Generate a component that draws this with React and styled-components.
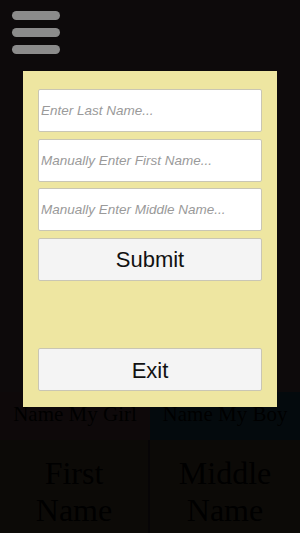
import React from "react";
import styled, { createGlobalStyle } from "styled-components";

const Global = createGlobalStyle`
  html, body {
    margin: 0;
    padding: 0;
    width: 300px;
    height: 533px;
    overflow: hidden;
    background: #e9b7c8;
  }
  * { box-sizing: border-box; }
`;

const Page = styled.div`
  width: 300px;
  height: 533px;
  display: flex;
  flex-direction: column;
  font-family: "Liberation Serif", "Times New Roman", serif;
  color: #000;
  background: #e9b7c8;
`;

const Top = styled.div`
  height: 392px;
  flex-shrink: 0;
`;

const Tabs = styled.div`
  display: flex;
  height: 48px;
`;

const Tab = styled.div`
  width: 150px;
  padding-top: 10px;
  text-align: center;
  font-size: 21px;
  background: ${(p) => (p.$boy ? "#53b7e9" : "#faa7b7")};
`;

const Grid = styled.div`
  flex: 1;
  display: grid;
  grid-template-columns: 150px 150px;
  background: #d9b785;
`;

const Cell = styled.div`
  padding-top: 15px;
  text-align: center;
  font-size: 32px;
  border-right: ${(p) => (p.$divider ? "2px solid #856475" : "none")};
`;

const Overlay = styled.div`
  position: fixed;
  inset: 0;
  background: rgba(0, 0, 0, 0.945);
  display: flex;
  justify-content: center;
  align-items: flex-start;
  padding-top: 71px;
`;

const Menu = styled.button`
  position: fixed;
  top: 11px;
  left: 12px;
  width: 48px;
  display: flex;
  flex-direction: column;
  gap: 8px;
  padding: 0;
  border: 0;
  background: none;
`;

const Bar = styled.span`
  display: block;
  height: 9px;
  border-radius: 5px;
  background: #8b8b8b;
`;

const Modal = styled.div`
  width: 254px;
  height: 336px;
  background: #eee6a1;
  padding: 18px 15px 16px;
  display: flex;
  flex-direction: column;
  gap: 6.5px;
`;

const Field = styled.input`
  width: 100%;
  height: 43px;
  flex-shrink: 0;
  border: 1px solid #c9c6b4;
  border-radius: 2px;
  background: #fff;
  padding: 0 2px;
  font-family: "Liberation Sans", Arial, sans-serif;
  font-size: 13.5px;
  font-style: italic;
  color: #333;
  outline: none;
  &::placeholder {
    color: #9a9a9a;
  }
`;

const Action = styled.button`
  width: 100%;
  height: 43px;
  flex-shrink: 0;
  border: 1px solid #c9c6b4;
  border-radius: 2px;
  background: #f4f4f4;
  font-family: "Liberation Sans", Arial, sans-serif;
  font-size: 22px;
  color: #111;
  padding: 2px 0 0;
  margin-top: ${(p) => (p.$push ? "auto" : "0")};
`;

export default function App() {
  return (
    <>
      <Global />
      <Page>
        <Top />
        <Tabs>
          <Tab>Name My Girl</Tab>
          <Tab $boy>Name My Boy</Tab>
        </Tabs>
        <Grid>
          <Cell $divider>
            First
            <br />
            Name
          </Cell>
          <Cell>
            Middle
            <br />
            Name
          </Cell>
        </Grid>
      </Page>
      <Overlay>
        <Modal>
          <Field placeholder="Enter Last Name..." />
          <Field placeholder="Manually Enter First Name..." />
          <Field placeholder="Manually Enter Middle Name..." />
          <Action>Submit</Action>
          <Action $push>Exit</Action>
        </Modal>
      </Overlay>
      <Menu aria-label="menu">
        <Bar />
        <Bar />
        <Bar />
      </Menu>
    </>
  );
}
